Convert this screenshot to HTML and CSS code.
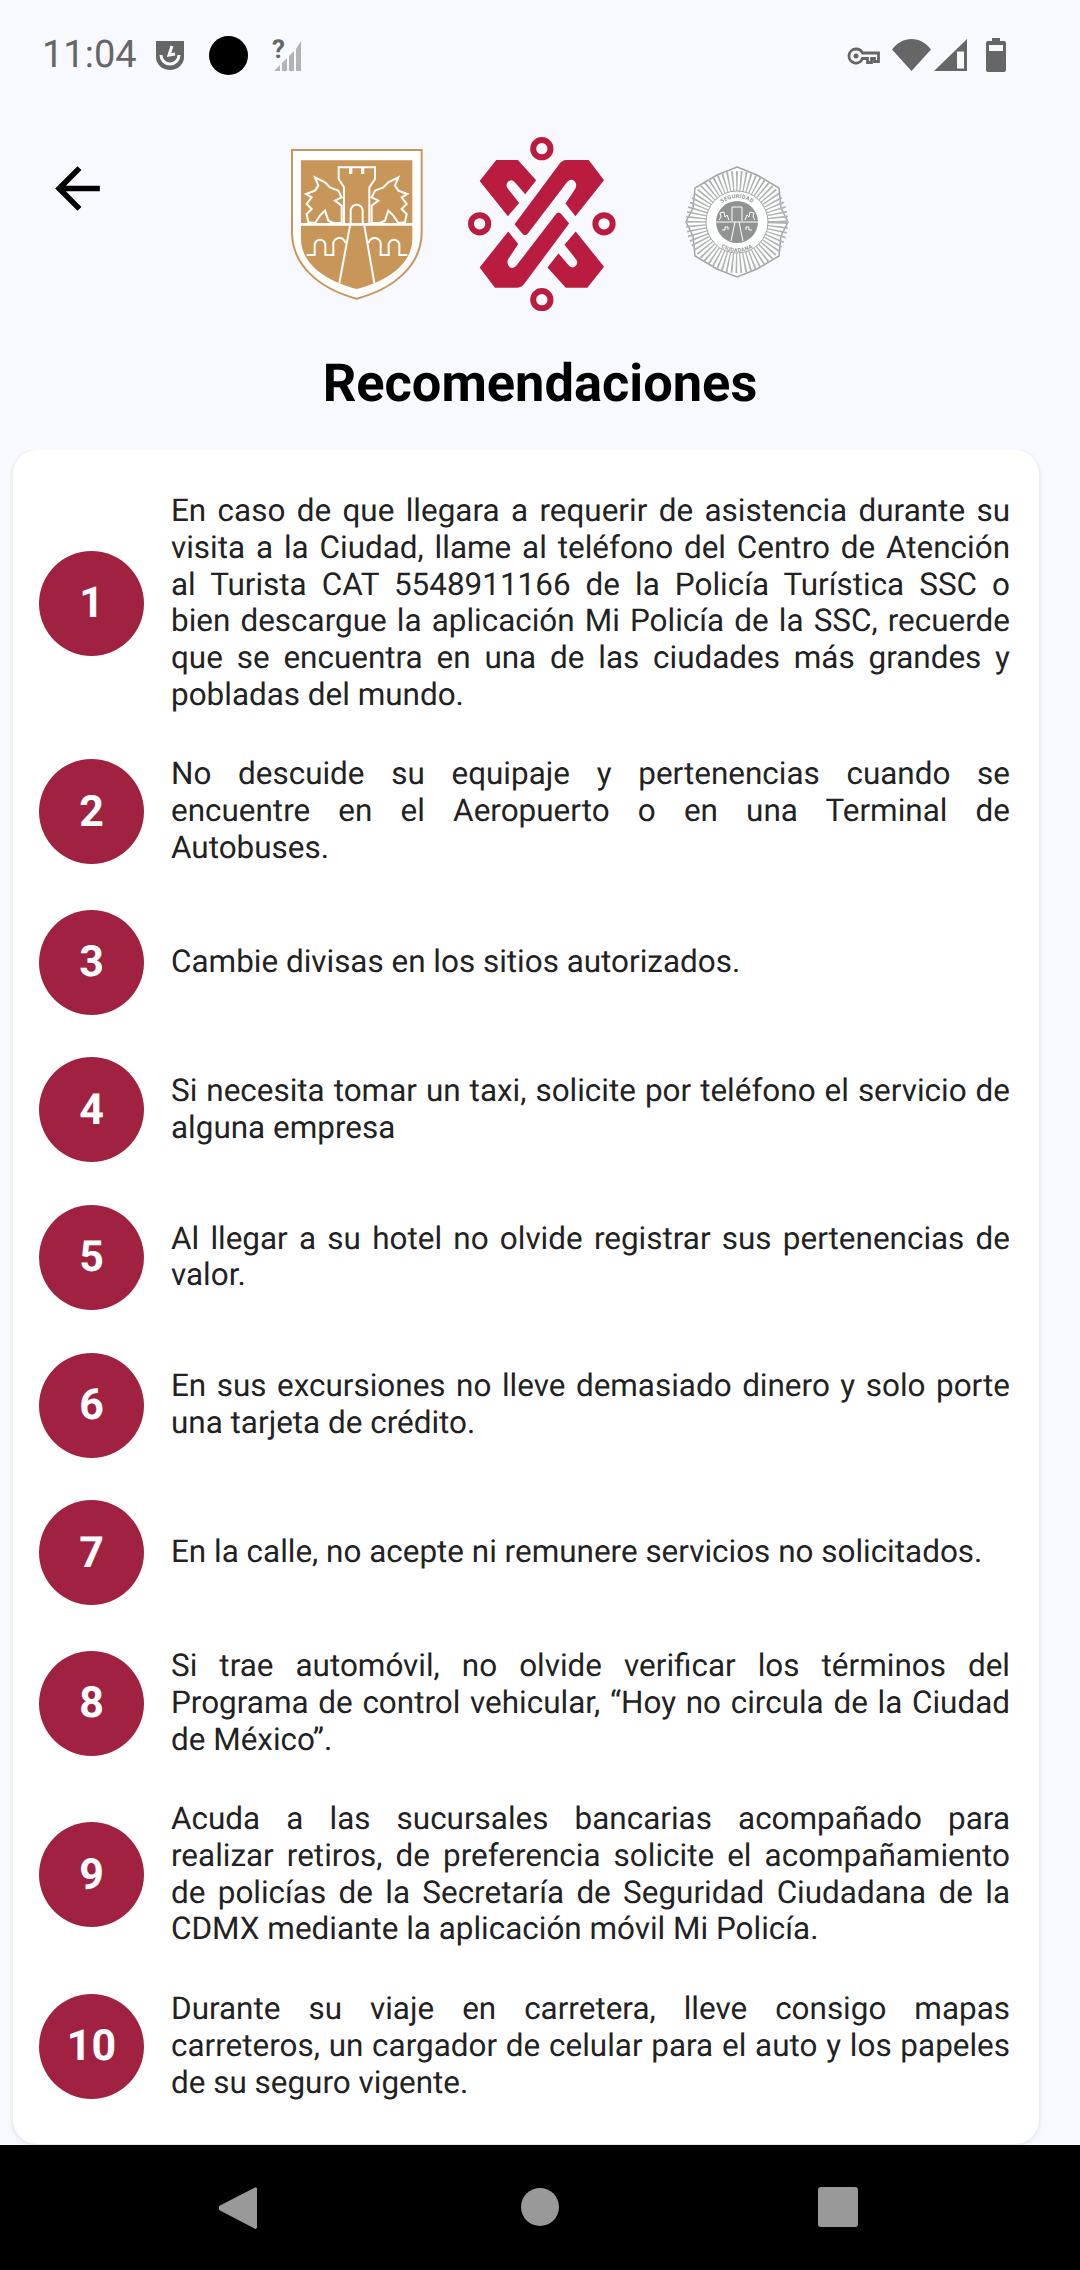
FILE: index.html
```html
<!DOCTYPE html>
<html lang="es">
<head>
    <meta charset="UTF-8">
    <meta name="viewport" content="width=device-width, initial-scale=1.0">
    <title>Recomendaciones</title>
    <link rel="stylesheet" href="styles.css">
</head>
<body>
    <div class="page">
        <div class="status-bar">
            <span class="time">11:04</span>
            <svg class="ic-shield" viewBox="0 0 30 30"><path d="M1 1h28v16a14 13 0 0 1-28 0z" fill="#666"/><path d="M6 15a9 9 0 0 0 18 0" fill="none" stroke="#f8f9ff" stroke-width="3"/><path d="M17 6l-3 9 6-1" fill="none" stroke="#f8f9ff" stroke-width="3"/></svg>
            <span class="dot"></span>
            <svg class="ic-nosim" viewBox="0 0 28 31"><path d="M1 31l6-6v6zM9 23l5-5v13H9zM16 16l5-5v20h-5zM23 9l5-8v30h-5z" fill="#b3b3b8"/><text x="-1" y="18" class="q">?</text></svg>
            <span class="spacer"></span>
            <svg class="ic-key" viewBox="0 0 33 18"><path d="M9 2a7 7 0 1 0 6.500 9.500h5v4h4v-4h3v3h4V6H15.500A7 7 0 0 0 9 2z" fill="none" stroke="#666" stroke-width="2.800"/><circle cx="9" cy="9" r="2.500" fill="#666"/></svg>
            <svg class="ic-wifi" viewBox="0 0 39 32"><path d="M0 10.500C5 4 12 0 19.500 0S34 4 39 10.500L19.500 32z" fill="#666"/></svg>
            <svg class="ic-signal" viewBox="0 0 33 32"><path d="M0 32L33 0v32z" fill="#666"/><path d="M23 12.500h7v17h-7z" fill="#f8f9ff"/></svg>
            <svg class="ic-batt" viewBox="0 0 20 34"><path d="M6 0h8v3h4a2 2 0 0 1 2 2v27a2 2 0 0 1-2 2H2a2 2 0 0 1-2-2V5a2 2 0 0 1 2-2h4z" fill="#666"/><path d="M3 7h14v6H3z" fill="#f8f9ff"/></svg>
        </div>

        <div class="top">
            <svg class="back" viewBox="0 0 24 24"><path d="M20 11H7.830l5.590-5.590L12 4l-8 8 8 8 1.410-1.410L7.830 13H20v-2z" fill="#000"/></svg>

            <svg class="logo-shield" viewBox="63 70 396 453">
                <path d="M66 73H455V320C455 420 370 490 260 519C150 490 66 420 66 320Z" fill="#fff" stroke="#c9965a" stroke-width="6"/>
                <path d="M93 104H427V292H93Z" fill="#c9965a"/>
                <path d="M93 300H427V340C427 410 360 465 260 490C160 465 93 410 93 340Z" fill="#c9965a"/>
                <g fill="#c9965a" stroke="#fff" stroke-width="6">
                    <path d="M135 155L165 170 180 185 205 195 215 215 195 225 215 240V292H190L175 285 165 255 150 270 135 292 115 290 110 265 125 250 110 235 125 215 108 205 135 195 145 180Z"/>
                    <path d="M385 155L355 170 340 185 315 195 305 215 325 225 305 240V292H330L345 285 355 255 370 270 385 292 405 290 410 265 395 250 410 235 395 215 412 205 385 195 375 180Z"/>
                    <path d="M206 125H315V160L298 185V295H222V185L206 160Z"/>
                    <path d="M242 125v20M278 125v20" stroke-width="10"/>
                    <path d="M242 295v-40a18 18 0 0 1 36 0v40" fill="none"/>
                    <path d="M240 300L208 472M283 300L313 472" fill="none"/>
                    <path d="M110 388h24v-30a16 16 0 0 1 32 0v30h24v-30a16 16 0 0 1 36 -6" fill="none"/>
                    <path d="M412 388h-24v-30a16 16 0 0 0-32 0v30h-24v-30a16 16 0 0 0-36 -6" fill="none"/>
                </g>
            </svg>

            <svg class="logo-cdmx" viewBox="595 35 445 523">
                <g fill="none" stroke="#ba1c40" stroke-width="18">
                    <circle cx="817" cy="70" r="26"/>
                    <circle cx="630" cy="296" r="26"/>
                    <circle cx="1004" cy="296" r="26"/>
                    <circle cx="817" cy="524" r="26"/>
                </g>
                <g fill="#ba1c40">
                    <path d="M630 167L680 104H745L800 165L767 207L735 170Q725 160 715 170Q706 180 716 192L749 233L715 273Z"/>
                    <path d="M735 297L868 118Q878 104 890 104H958L1004 165L918 273L888 235L918 190Q925 175 912 165Q900 160 892 172L775 325Q767 335 758 325Z"/>
                </g>
                <g fill="#ba1c40" transform="rotate(180 817 296)">
                    <path d="M630 167L680 104H745L800 165L767 207L735 170Q725 160 715 170Q706 180 716 192L749 233L715 273Z"/>
                    <path d="M735 297L868 118Q878 104 890 104H958L1004 165L918 273L888 235L918 190Q925 175 912 165Q900 160 892 172L775 325Q767 335 758 325Z"/>
                </g>
            </svg>

            <svg class="logo-badge" viewBox="0 0 104 112">
                <path d="M52 1L72 9 94 22 96 42 103 56 96 70 94 90 72 103 52 111 32 103 10 90 8 70 1 56 8 42 10 22 32 9Z" fill="#fff" stroke="#a3a6a6" stroke-width="1.500"/>
                <circle cx="52" cy="56" r="41" fill="none" stroke="#b0b3b3" stroke-width="20" stroke-dasharray="1.600 2.400"/>
                <circle cx="52" cy="56" r="31" fill="#fff" stroke="#a3a6a6"/>
                <circle cx="52" cy="56" r="21" fill="#8f9392"/>
                <path d="M31 56H73" stroke="#fff" stroke-width="1"/>
                <path d="M47 55V41h10v14M50 56L46 75M54 56L58 75M44 54l-2-5-2 2-1-5-4 1 1 4-2 3M60 54l2-5 2 2 1-5 4 1-1 4 2 3M37 64h3v-3h3v3M67 64h-3v-3h-3v3" fill="none" stroke="#fff" stroke-width="1"/>
                <path id="arcTop" d="M28 56a24 24 0 0 1 48 0" fill="none"/>
                <path id="arcBot" d="M24 58a28 28 0 0 0 56 0" fill="none"/>
                <text class="badge-text"><textPath href="#arcTop" startOffset="50%" text-anchor="middle">SEGURIDAD</textPath></text>
                <text class="badge-text"><textPath href="#arcBot" startOffset="50%" text-anchor="middle">CIUDADANA</textPath></text>
            </svg>
        </div>

        <h1 class="title">Recomendaciones</h1>

        <div class="content">
            <div class="card">
                <div class="row">
                    <div class="num">1</div>
                    <p class="txt">En caso de que llegara a requerir de asistencia durante su visita a la Ciudad, llame al teléfono del Centro de Atención al Turista CAT 5548911166 de la Policía Turística SSC o bien descargue la aplicación Mi Policía de la SSC, recuerde que se encuentra en una de las ciudades más grandes y pobladas del mundo.</p>
                </div>
                <div class="row">
                    <div class="num">2</div>
                    <p class="txt">No descuide su equipaje y pertenencias cuando se encuentre en el Aeropuerto o en una Terminal de Autobuses.</p>
                </div>
                <div class="row">
                    <div class="num">3</div>
                    <p class="txt">Cambie divisas en los sitios autorizados.</p>
                </div>
                <div class="row">
                    <div class="num">4</div>
                    <p class="txt">Si necesita tomar un taxi, solicite por teléfono el servicio de alguna empresa</p>
                </div>
                <div class="row">
                    <div class="num">5</div>
                    <p class="txt">Al llegar a su hotel no olvide registrar sus pertenencias de valor.</p>
                </div>
                <div class="row">
                    <div class="num">6</div>
                    <p class="txt">En sus excursiones no lleve demasiado dinero y solo porte una tarjeta de crédito.</p>
                </div>
                <div class="row">
                    <div class="num">7</div>
                    <p class="txt">En la calle, no acepte ni remunere servicios no solicitados.</p>
                </div>
                <div class="row">
                    <div class="num">8</div>
                    <p class="txt">Si trae automóvil, no olvide verificar los términos del Programa de control vehicular, “Hoy no circula de la Ciudad de México”.</p>
                </div>
                <div class="row">
                    <div class="num">9</div>
                    <p class="txt">Acuda a las sucursales bancarias acompañado para realizar retiros, de preferencia solicite el acompañamiento de policías de la Secretaría de Seguridad Ciudadana de la CDMX mediante la aplicación móvil Mi Policía.</p>
                </div>
                <div class="row">
                    <div class="num">10</div>
                    <p class="txt">Durante su viaje en carretera, lleve consigo mapas carreteros, un cargador de celular para el auto y los papeles de su seguro vigente.</p>
                </div>
            </div>
        </div>

        <div class="nav-bar">
            <svg class="nav-back" viewBox="0 0 38 44"><path d="M36 1.500a1.500 1.500 0 0 1 2 1V41.500a1.500 1.500 0 0 1-2.500 1L1 24.500a3 3 0 0 1 0-5z" fill="#999"/></svg>
            <span class="nav-home"></span>
            <span class="nav-recent"></span>
        </div>
    </div>
</body>
</html>
```

FILE: styles.css
```css
* {
    box-sizing: border-box;
}
body {
    margin: 0;
    background-color: #f8f9ff;
    font-family: Roboto, sans-serif;
    text-rendering: geometricPrecision;
}
.page {
    display: flex;
    flex-direction: column;
    height: 2270px;
    overflow: hidden;
}

/* Status bar */
.status-bar {
    display: flex;
    align-items: center;
    height: 110px;
    padding: 0 74px 0 42px;
    flex-shrink: 0;
}
.time {
    font-size: 38px;
    color: #666;
    width: 113px;
}
.ic-shield {
    width: 30px;
    height: 30px;
    margin-right: 24px;
}
.dot {
    width: 39px;
    height: 39px;
    border-radius: 50%;
    background-color: #000;
    margin-right: 25px;
}
.ic-nosim {
    width: 28px;
    height: 31px;
    margin-top: 1px;
    overflow: visible;
}
.q {
    font-size: 26px;
    font-weight: 700;
    fill: #666;
}
.spacer {
    flex: 1;
}
.ic-key {
    width: 33px;
    height: 18px;
    margin-right: 12px;
    margin-top: 1px;
}
.ic-wifi {
    width: 39px;
    height: 32px;
    margin-right: 3px;
}
.ic-signal {
    width: 33px;
    height: 32px;
    margin-right: 19px;
}
.ic-batt {
    width: 20px;
    height: 34px;
}

/* Header with logos */
.top {
    display: flex;
    align-items: center;
    height: 228px;
    flex-shrink: 0;
}
.back {
    width: 67px;
    height: 67px;
    margin-left: 44px;
    margin-bottom: 72px;
    margin-right: 180px;
}
.logo-shield {
    width: 132px;
    height: 151px;
    margin-right: 45px;
}
.logo-cdmx {
    width: 148px;
    height: 174px;
    margin-right: 69px;
}
.logo-badge {
    width: 104px;
    height: 112px;
    margin-bottom: 4px;
}
.badge-text {
    font-size: 5.500px;
    font-weight: 700;
    fill: #8f9392;
    letter-spacing: 0.300px;
}
.title {
    margin: 0;
    height: 112px;
    font-size: 52.400px;
    font-weight: 700;
    line-height: 90px;
    text-align: center;
    color: #000;
    flex-shrink: 0;
}

/* Card */
.content {
    flex: 1;
    overflow: hidden;
    padding: 0 41px 0 13px;
    min-height: 0;
}
.card {
    display: flex;
    flex-direction: column;
    gap: 42.700px;
    height: 1694px;
    padding: 43px 29px 0 26px;
    background-color: #fff;
    border-radius: 24px;
    box-shadow: 0 1px 5px rgba(0, 0, 0, 0.12);
}
.row {
    display: flex;
    align-items: center;
    gap: 27px;
}
.num {
    display: flex;
    align-items: center;
    justify-content: center;
    width: 105px;
    height: 105px;
    flex-shrink: 0;
    border-radius: 50%;
    background-color: #a02240;
    color: #fff;
    font-size: 43px;
    font-weight: 700;
}
.txt {
    flex: 1;
    margin: 0;
    font-size: 31.450px;
    line-height: 36.800px;
    color: #222;
    text-align: justify;
}

/* Android nav */
.nav-bar {
    position: relative;
    height: 125px;
    flex-shrink: 0;
    background-color: #000;
}
.nav-back {
    position: absolute;
    left: 219px;
    top: 41px;
    width: 38px;
    height: 44px;
}
.nav-home {
    position: absolute;
    left: 521px;
    top: 43px;
    width: 38px;
    height: 38px;
    border-radius: 50%;
    background-color: #999;
}
.nav-recent {
    position: absolute;
    left: 818px;
    top: 42px;
    width: 40px;
    height: 40px;
    border-radius: 3px;
    background-color: #999;
}
```
